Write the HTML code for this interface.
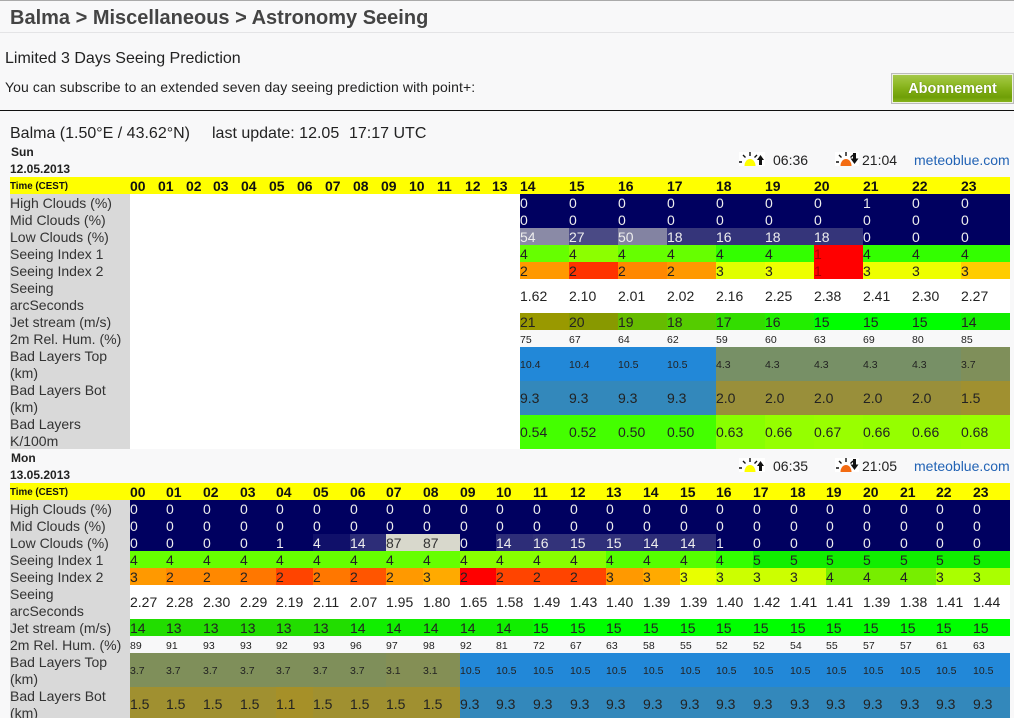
<!DOCTYPE html>
<html lang="en">
<head>
<meta charset="utf-8">
<title>Balma &gt; Miscellaneous &gt; Astronomy Seeing</title>
<style>
html,body{margin:0;padding:0;width:1014px;height:718px;overflow:hidden;background:#f8f8f9;font-family:"Liberation Sans",Arial,sans-serif;color:#222}
body{position:relative}
.a{position:absolute;white-space:nowrap}
#top{position:absolute;left:0;top:0;width:1014px;height:1px;background:#aaa}
#ttl{left:10px;top:6px;font-size:20px;line-height:24px;font-weight:bold;color:#444}
#l1{position:absolute;left:0;top:32px;width:1014px;height:1px;background:#e4e4e6}
#l2{position:absolute;left:0;top:110px;width:1014px;height:1px;background:#111}
#btn{position:absolute;left:891px;top:73px;width:121px;height:29px;border:1px solid #bbb;box-shadow:inset 0 0 0 1px #eef2e0;background:linear-gradient(#a6c94e 0,#93bd2c 30%,#80ad14 55%,#6f9f07 80%,#8ab61f 100%);color:#fff;font-size:14.5px;font-weight:bold;line-height:31px;text-align:center;text-shadow:0 0 1px #4a6a00}
table{position:absolute;left:10px;border-collapse:collapse;border-spacing:0;table-layout:fixed;width:1000px;font-size:14px}
td{padding:2px 0 0;border:0;line-height:15px;height:15px;text-align:left;white-space:nowrap;overflow:hidden;vertical-align:middle}
td.l{background:#d9d9d9;color:#333;white-space:normal;vertical-align:top}
tr.y td{background:#ff0;font-weight:bold;color:#111}
tr.y td.t{font-size:9.8px;font-weight:bold;padding-top:3px;height:14px;line-height:14px}
tr.n td{color:#eee}
tr.n td.l{color:#333}
tr.t2 td{height:34px;padding-top:0;line-height:17px}
tr.s td{font-size:10.5px;padding-top:4px;line-height:13px;height:13px}
tr.s td.l{font-size:14px;padding-top:2px;line-height:15px;height:15px}
tr.t2.s td{padding-top:2px;height:32px;line-height:17px}
tr.t2.s td.l{padding-top:0;height:34px;line-height:17px}
td.l div{position:relative;top:1px;height:34px}
td.w{background:#fff;padding:0}
svg{position:absolute;background:#fff}
</style>
</head>
<body>
<div id="top"></div>
<div class="a" id="ttl">Balma &gt; Miscellaneous &gt; Astronomy Seeing</div>
<div id="l1"></div>
<div class="a" style="left:5px;top:49px;font-size:16px;line-height:19px">Limited 3 Days Seeing Prediction</div>
<div class="a" style="left:5px;top:79px;font-size:14px;line-height:17px;letter-spacing:.1px">You can subscribe to an extended seven day seeing prediction with point+:</div>
<div id="btn">Abonnement</div>
<div id="l2"></div>
<div class="a" style="left:10px;top:124px;font-size:16px;line-height:19px">Balma (1.50°E / 43.62°N)</div>
<div class="a" style="left:212px;top:124px;font-size:16px;line-height:19px">last update: 12.05</div>
<div class="a" style="left:349px;top:124px;font-size:16px;line-height:19px">17:17 UTC</div>

<div class="a" style="left:11px;top:145px;font-size:12px;line-height:15px;font-weight:bold">Sun</div>
<div class="a" style="left:10px;top:162px;font-size:12px;line-height:15px;font-weight:bold">12.05.2013</div>
<svg style="left:739px;top:152px" width="26" height="14" viewBox="0 0 26 14"><path d="M0 10h3M4 3l2.500 2.500M11 0v4M18 3l-2.500 2.500" stroke="#111" stroke-width="1.4" fill="none"/><path d="M5.500 14a5.500 7 0 0 1 11 0z" fill="#ff0"/><path d="M21.500 3l3.500 5h-2v5h-3v-5h-2z" fill="#111"/></svg>
<div class="a" style="left:773px;top:152px;font-size:14px;line-height:17px">06:36</div>
<svg style="left:835px;top:152px" width="24" height="14" viewBox="0 0 24 14"><path d="M1 10h3M4 3l2.500 2.500M11 0v4M18 3l-2.500 2.500" stroke="#111" stroke-width="1.4" fill="none"/><path d="M5.500 14a5.500 7 0 0 1 11 0z" fill="#f36b12"/><path d="M18 1h3v5.500h2.500l-4 5.500-4-5.500h2.500z" fill="#111"/></svg>
<div class="a" style="left:862px;top:152px;font-size:14px;line-height:17px">21:04</div>
<div class="a" style="left:914px;top:152px;font-size:14px;line-height:17px;color:#2263b5">meteoblue.com</div>

<table style="top:177px">
<colgroup><col style="width:120px"><col style="width:28px"><col style="width:28px"><col style="width:27px"><col style="width:28px"><col style="width:28px"><col style="width:28px"><col style="width:28px"><col style="width:28px"><col style="width:28px"><col style="width:28px"><col style="width:28px"><col style="width:28px"><col style="width:27px"><col style="width:28px"><col style="width:49px"><col style="width:49px"><col style="width:49px"><col style="width:49px"><col style="width:49px"><col style="width:49px"><col style="width:49px"><col style="width:49px"><col style="width:49px"><col style="width:49px"></colgroup>
<tr class="y"><td class="t">Time (CEST)</td><td>00</td><td>01</td><td>02</td><td>03</td><td>04</td><td>05</td><td>06</td><td>07</td><td>08</td><td>09</td><td>10</td><td>11</td><td>12</td><td>13</td><td>14</td><td>15</td><td>16</td><td>17</td><td>18</td><td>19</td><td>20</td><td>21</td><td>22</td><td>23</td></tr>
<tr class="n" style="background:#000060"><td class="l">High Clouds (%)</td><td class="w" colspan="14" rowspan="11"></td><td>0</td><td>0</td><td>0</td><td>0</td><td>0</td><td>0</td><td>0</td><td>1</td><td>0</td><td>0</td></tr>
<tr class="n" style="background:#000060"><td class="l">Mid Clouds (%)</td><td>0</td><td>0</td><td>0</td><td>0</td><td>0</td><td>0</td><td>0</td><td>0</td><td>0</td><td>0</td></tr>
<tr class="n" style="background:#000060"><td class="l">Low Clouds (%)</td><td style="background:#8a8aa6">54</td><td style="background:#4a4a85">27</td><td style="background:#8383a2">50</td><td style="background:#35357a">18</td><td style="background:#33337a">16</td><td style="background:#35357a">18</td><td style="background:#35357a">18</td><td>0</td><td>0</td><td>0</td></tr>
<tr><td class="l">Seeing Index 1</td><td style="background:#66ff00">4</td><td style="background:#8cff00">4</td><td style="background:#66ff00">4</td><td style="background:#66ff00">4</td><td style="background:#33ff00">4</td><td style="background:#33ff00">4</td><td style="background:#ff0000;color:#a00">1</td><td style="background:#33ff00">4</td><td style="background:#33ff00">4</td><td style="background:#33ff00">4</td></tr>
<tr><td class="l">Seeing Index 2</td><td style="background:#ff9900">2</td><td style="background:#ff3300">2</td><td style="background:#ff8800">2</td><td style="background:#ff9900">2</td><td style="background:#e0ff00">3</td><td style="background:#eeff00">3</td><td style="background:#ff0000;color:#a00">1</td><td style="background:#eeff00">3</td><td style="background:#eeff00">3</td><td style="background:#ffcc00">3</td></tr>
<tr class="t2" style="background:#fff"><td class="l"><div>Seeing arcSeconds</div></td><td>1.62</td><td>2.10</td><td>2.01</td><td>2.02</td><td>2.16</td><td>2.25</td><td>2.38</td><td>2.41</td><td>2.30</td><td>2.27</td></tr>
<tr><td class="l">Jet stream (m/s)</td><td style="background:#999900">21</td><td style="background:#889900">20</td><td style="background:#66bb00">19</td><td style="background:#55cc00">18</td><td style="background:#33dd00">17</td><td style="background:#22ee00">16</td><td style="background:#00ff00">15</td><td style="background:#00ff00">15</td><td style="background:#00ff00">15</td><td style="background:#11ee00">14</td></tr>
<tr class="s"><td class="l">2m Rel. Hum. (%)</td><td style="background:#f8f8f9">75</td><td style="background:#f8f8f9">67</td><td style="background:#f8f8f9">64</td><td style="background:#f8f8f9">62</td><td style="background:#f8f8f9">59</td><td style="background:#f8f8f9">60</td><td style="background:#f8f8f9">63</td><td style="background:#f8f8f9">69</td><td style="background:#f8f8f9">80</td><td style="background:#f8f8f9">85</td></tr>
<tr class="t2 s"><td class="l"><div>Bad Layers Top (km)</div></td><td style="background:#2288d8">10.4</td><td style="background:#2288d8">10.4</td><td style="background:#2288d8">10.5</td><td style="background:#2288d8">10.5</td><td style="background:#779066">4.3</td><td style="background:#779066">4.3</td><td style="background:#779066">4.3</td><td style="background:#779066">4.3</td><td style="background:#779066">4.3</td><td style="background:#7f8f5a">3.7</td></tr>
<tr class="t2"><td class="l"><div>Bad Layers Bot (km)</div></td><td style="background:#3388bb">9.3</td><td style="background:#3388bb">9.3</td><td style="background:#3388bb">9.3</td><td style="background:#3388bb">9.3</td><td style="background:#998f3a">2.0</td><td style="background:#998f3a">2.0</td><td style="background:#998f3a">2.0</td><td style="background:#998f3a">2.0</td><td style="background:#998f3a">2.0</td><td style="background:#a09030">1.5</td></tr>
<tr class="t2"><td class="l"><div>Bad Layers K/100m</div></td><td style="background:#44ff00">0.54</td><td style="background:#44ff00">0.52</td><td style="background:#44ff00">0.50</td><td style="background:#44ff00">0.50</td><td style="background:#88ff00">0.63</td><td style="background:#95ff00">0.66</td><td style="background:#99ff00">0.67</td><td style="background:#95ff00">0.66</td><td style="background:#95ff00">0.66</td><td style="background:#99ff00">0.68</td></tr>
</table>

<div class="a" style="left:11px;top:451px;font-size:12px;line-height:15px;font-weight:bold">Mon</div>
<div class="a" style="left:10px;top:468px;font-size:12px;line-height:15px;font-weight:bold">13.05.2013</div>
<svg style="left:739px;top:458px" width="26" height="14" viewBox="0 0 26 14"><path d="M0 10h3M4 3l2.500 2.500M11 0v4M18 3l-2.500 2.500" stroke="#111" stroke-width="1.4" fill="none"/><path d="M5.500 14a5.500 7 0 0 1 11 0z" fill="#ff0"/><path d="M21.500 3l3.500 5h-2v5h-3v-5h-2z" fill="#111"/></svg>
<div class="a" style="left:773px;top:458px;font-size:14px;line-height:17px">06:35</div>
<svg style="left:835px;top:458px" width="24" height="14" viewBox="0 0 24 14"><path d="M1 10h3M4 3l2.500 2.500M11 0v4M18 3l-2.500 2.500" stroke="#111" stroke-width="1.4" fill="none"/><path d="M5.500 14a5.500 7 0 0 1 11 0z" fill="#f36b12"/><path d="M18 1h3v5.500h2.500l-4 5.500-4-5.500h2.500z" fill="#111"/></svg>
<div class="a" style="left:862px;top:458px;font-size:14px;line-height:17px">21:05</div>
<div class="a" style="left:914px;top:458px;font-size:14px;line-height:17px;color:#2263b5">meteoblue.com</div>

<table style="top:483px">
<colgroup><col style="width:120px"><col style="width:36px"><col style="width:37px"><col style="width:37px"><col style="width:36px"><col style="width:37px"><col style="width:37px"><col style="width:36px"><col style="width:37px"><col style="width:37px"><col style="width:36px"><col style="width:37px"><col style="width:37px"><col style="width:36px"><col style="width:37px"><col style="width:37px"><col style="width:36px"><col style="width:37px"><col style="width:37px"><col style="width:36px"><col style="width:37px"><col style="width:37px"><col style="width:36px"><col style="width:37px"><col style="width:37px"></colgroup>
<tr class="y"><td class="t">Time (CEST)</td><td>00</td><td>01</td><td>02</td><td>03</td><td>04</td><td>05</td><td>06</td><td>07</td><td>08</td><td>09</td><td>10</td><td>11</td><td>12</td><td>13</td><td>14</td><td>15</td><td>16</td><td>17</td><td>18</td><td>19</td><td>20</td><td>21</td><td>22</td><td>23</td></tr>
<tr class="n" style="background:#000060"><td class="l">High Clouds (%)</td><td>0</td><td>0</td><td>0</td><td>0</td><td>0</td><td>0</td><td>0</td><td>0</td><td>0</td><td>0</td><td>0</td><td>0</td><td>0</td><td>0</td><td>0</td><td>0</td><td>0</td><td>0</td><td>0</td><td>0</td><td>0</td><td>0</td><td>0</td><td>0</td></tr>
<tr class="n" style="background:#000060"><td class="l">Mid Clouds (%)</td><td>0</td><td>0</td><td>0</td><td>0</td><td>0</td><td>0</td><td>0</td><td>0</td><td>0</td><td>0</td><td>0</td><td>0</td><td>0</td><td>0</td><td>0</td><td>0</td><td>0</td><td>0</td><td>0</td><td>0</td><td>0</td><td>0</td><td>0</td><td>0</td></tr>
<tr class="n" style="background:#000060"><td class="l">Low Clouds (%)</td><td>0</td><td>0</td><td>0</td><td>0</td><td>1</td><td style="background:#10106a">4</td><td style="background:#2d2d78">14</td><td style="background:#d8d8cc;color:#333">87</td><td style="background:#d8d8cc;color:#333">87</td><td>0</td><td style="background:#2d2d78">14</td><td style="background:#33337a">16</td><td style="background:#30307a">15</td><td style="background:#30307a">15</td><td style="background:#2d2d78">14</td><td style="background:#2d2d78">14</td><td>1</td><td>0</td><td>0</td><td>0</td><td>0</td><td>0</td><td>0</td><td>0</td></tr>
<tr><td class="l">Seeing Index 1</td><td style="background:#66ff00">4</td><td style="background:#66ff00">4</td><td style="background:#66ff00">4</td><td style="background:#66ff00">4</td><td style="background:#66ff00">4</td><td style="background:#66ff00">4</td><td style="background:#66ff00">4</td><td style="background:#66ff00">4</td><td style="background:#66ff00">4</td><td style="background:#88ff00">4</td><td style="background:#88ff00">4</td><td style="background:#88ff00">4</td><td style="background:#88ff00">4</td><td style="background:#55ff00">4</td><td style="background:#55ff00">4</td><td style="background:#55ff00">4</td><td style="background:#33ff00">4</td><td style="background:#11ee00">5</td><td style="background:#11ee00">5</td><td style="background:#11ee00">5</td><td style="background:#11ee00">5</td><td style="background:#11ee00">5</td><td style="background:#11ee00">5</td><td style="background:#11ee00">5</td></tr>
<tr><td class="l">Seeing Index 2</td><td style="background:#ff9900">3</td><td style="background:#ff8800">2</td><td style="background:#ff8800">2</td><td style="background:#ff7700">2</td><td style="background:#ff4400">2</td><td style="background:#ff7700">2</td><td style="background:#ff5500">2</td><td style="background:#ff9900">2</td><td style="background:#ffaa00">3</td><td style="background:#ff0000">2</td><td style="background:#ff4400">2</td><td style="background:#ff4400">2</td><td style="background:#ff4400">2</td><td style="background:#ff9900">3</td><td style="background:#ffaa00">3</td><td style="background:#e8ff00">3</td><td style="background:#ccff00">3</td><td style="background:#ccff00">3</td><td style="background:#ccff00">3</td><td style="background:#77ee00">4</td><td style="background:#77ee00">4</td><td style="background:#77ee00">4</td><td style="background:#aaff00">3</td><td style="background:#aaff00">3</td></tr>
<tr class="t2" style="background:#fff"><td class="l"><div>Seeing arcSeconds</div></td><td>2.27</td><td>2.28</td><td>2.30</td><td>2.29</td><td>2.19</td><td>2.11</td><td>2.07</td><td>1.95</td><td>1.80</td><td>1.65</td><td>1.58</td><td>1.49</td><td>1.43</td><td>1.40</td><td>1.39</td><td>1.39</td><td>1.40</td><td>1.42</td><td>1.41</td><td>1.41</td><td>1.39</td><td>1.38</td><td>1.41</td><td>1.44</td></tr>
<tr><td class="l">Jet stream (m/s)</td><td style="background:#22dd00">14</td><td style="background:#22dd00">13</td><td style="background:#22dd00">13</td><td style="background:#22dd00">13</td><td style="background:#22dd00">13</td><td style="background:#22dd00">13</td><td style="background:#11ee00">14</td><td style="background:#11ee00">14</td><td style="background:#11ee00">14</td><td style="background:#11ee00">14</td><td style="background:#11ee00">14</td><td style="background:#00ff00">15</td><td style="background:#00ff00">15</td><td style="background:#00ff00">15</td><td style="background:#00ff00">15</td><td style="background:#00ff00">15</td><td style="background:#00ff00">15</td><td style="background:#00ff00">15</td><td style="background:#00ff00">15</td><td style="background:#00ff00">15</td><td style="background:#00ff00">15</td><td style="background:#00ff00">15</td><td style="background:#00ff00">15</td><td style="background:#00ff00">15</td></tr>
<tr class="s"><td class="l">2m Rel. Hum. (%)</td><td>89</td><td>91</td><td>93</td><td>93</td><td>92</td><td>93</td><td>96</td><td>97</td><td>98</td><td>92</td><td>81</td><td>72</td><td>67</td><td>63</td><td>58</td><td>55</td><td>52</td><td>52</td><td>54</td><td>55</td><td>57</td><td>57</td><td>61</td><td>63</td></tr>
<tr class="t2 s"><td class="l"><div>Bad Layers Top (km)</div></td><td style="background:#7f8f5a">3.7</td><td style="background:#7f8f5a">3.7</td><td style="background:#7f8f5a">3.7</td><td style="background:#7f8f5a">3.7</td><td style="background:#7f8f5a">3.7</td><td style="background:#7f8f5a">3.7</td><td style="background:#7f8f5a">3.7</td><td style="background:#848f55">3.1</td><td style="background:#848f55">3.1</td><td style="background:#2288d8">10.5</td><td style="background:#2288d8">10.5</td><td style="background:#2288d8">10.5</td><td style="background:#2288d8">10.5</td><td style="background:#2288d8">10.5</td><td style="background:#2288d8">10.5</td><td style="background:#2288d8">10.5</td><td style="background:#2288d8">10.5</td><td style="background:#2288d8">10.5</td><td style="background:#2288d8">10.5</td><td style="background:#2288d8">10.5</td><td style="background:#2288d8">10.5</td><td style="background:#2288d8">10.5</td><td style="background:#2288d8">10.5</td><td style="background:#2288d8">10.5</td></tr>
<tr class="t2"><td class="l"><div>Bad Layers Bot (km)</div></td><td style="background:#a09030">1.5</td><td style="background:#a09030">1.5</td><td style="background:#a09030">1.5</td><td style="background:#a09030">1.5</td><td style="background:#a69028">1.1</td><td style="background:#a09030">1.5</td><td style="background:#a09030">1.5</td><td style="background:#a09030">1.5</td><td style="background:#a09030">1.5</td><td style="background:#3388bb">9.3</td><td style="background:#3388bb">9.3</td><td style="background:#3388bb">9.3</td><td style="background:#3388bb">9.3</td><td style="background:#3388bb">9.3</td><td style="background:#3388bb">9.3</td><td style="background:#3388bb">9.3</td><td style="background:#3388bb">9.3</td><td style="background:#3388bb">9.3</td><td style="background:#3388bb">9.3</td><td style="background:#3388bb">9.3</td><td style="background:#3388bb">9.3</td><td style="background:#3388bb">9.3</td><td style="background:#3388bb">9.3</td><td style="background:#3388bb">9.3</td></tr>
</table>
</body>
</html>
